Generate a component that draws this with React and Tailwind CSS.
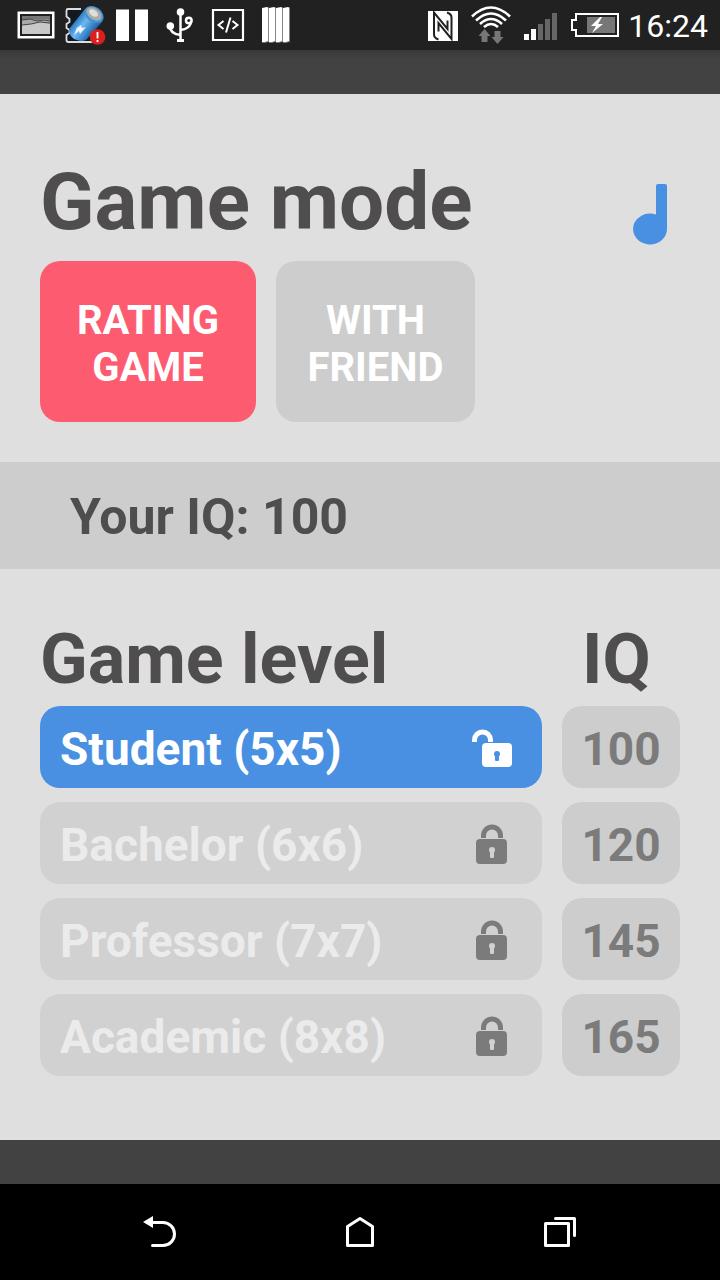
const LEVELS = [
  { name: 'Student (5x5)', iq: 100, unlocked: true },
  { name: 'Bachelor (6x6)', iq: 120, unlocked: false },
  { name: 'Professor (7x7)', iq: 145, unlocked: false },
  { name: 'Academic (8x8)', iq: 165, unlocked: false },
];

function StatusBar() {
  return (
    <header className="flex h-[50px] items-center justify-between bg-[#212121] pl-4 pr-3 text-white">
      <div className="flex items-center">
        <svg viewBox="0 0 40 50" className="h-[50px] w-10" aria-hidden="true">
          <path d="M1.500 11.500h37v27h-37z" fill="#fff" />
          <path d="M5 15h30v20H5z" fill="#aaa" stroke="#212121" strokeWidth="2" />
          <path d="M6 16h28v4l-5-1-7 1-8-1-8 1z" fill="#777" />
          <path d="M6 25l8-1 9-2 11 2v10H6z" fill="#c8c8c8" />
          <path d="M6 20l8-1 7 2 7-1 6 1M6 25l9-1 9-2 10 1" fill="none" stroke="#444" strokeWidth="1" />
        </svg>
        <svg viewBox="0 0 48 50" className="h-[50px] w-12 overflow-visible" aria-hidden="true">
          <defs>
            <linearGradient id="cell" gradientUnits="userSpaceOnUse" x1="22" y1="18" x2="40" y2="32">
              <stop offset="0" stopColor="#2f7cc4" />
              <stop offset="0.35" stopColor="#6db9f4" />
              <stop offset="1" stopColor="#14579c" />
            </linearGradient>
          </defs>
          <path d="M25 9H12q-1.500 0-1.500 1.500v6l3 2.500v3l-3 2v4l3 2v3l-3 2v5q0 2 2 2H38" fill="#101a20" stroke="#ddd" strokeWidth="1.800" />
          <path d="M29 9L13 29q0 9 8 11 5 2 9 0l17-19z" fill="url(#cell)" />
          <ellipse cx="38" cy="14.500" rx="10.500" ry="7.500" fill="#3f93d8" transform="rotate(35 38 14.500)" />
          <ellipse cx="38" cy="14" rx="8.500" ry="5.500" fill="#aaaaa6" transform="rotate(35 38 14)" />
          <ellipse cx="37.500" cy="13" rx="5" ry="3" fill="#dededa" transform="rotate(35 37.500 13)" />
          <path d="M22 25l-4 10 5-4 1 3 6-7-4 1-1-3-4 3z" fill="#e9f5ff" />
          <circle cx="41.500" cy="37" r="7.800" fill="#dc1f1c" />
          <path d="M41.500 32v6.500M41.500 40v2" stroke="#fff" strokeWidth="1.800" />
        </svg>
        <svg viewBox="0 0 56 50" className="h-[50px] w-14" aria-hidden="true">
          <path d="M12 9.500h13V41H12zM31 9.500h13V41H31z" fill="#fff" />
        </svg>
        <svg viewBox="0 0 40 50" className="h-[50px] w-10" aria-hidden="true">
          <g fill="none" stroke="#fff" strokeWidth="2.500">
            <path d="M20.500 12v29M10 26c0 6 5 8.500 10.500 9M20.500 30c5-.5 10.500-3 10.500-9" />
            <circle cx="28.800" cy="20.500" r="2.800" />
          </g>
          <circle cx="20.500" cy="12" r="3.800" fill="#fff" />
          <circle cx="10.300" cy="26" r="3.800" fill="#fff" />
          <path d="M17 39h7v3h-7z" fill="#fff" />
        </svg>
        <svg viewBox="0 0 56 50" className="h-[50px] w-14" aria-hidden="true">
          <path d="M13 10h30v30H13z" fill="none" stroke="#fff" strokeWidth="2.200" />
          <path d="M23.500 21l-5 4 5 4M32.500 21l5 4-5 4M30.500 17.500l-4.500 15" fill="none" stroke="#fff" strokeWidth="2" />
        </svg>
        <svg viewBox="0 0 40 50" className="h-[50px] w-10" aria-hidden="true">
          <path d="M6 8l5-1 2 1 5-1 2 1 5-1 2 1 5-1 2 1v34H6z" fill="#fff" />
          <path d="M12.500 8v34M19.500 8v34M26.500 8v34M33.500 8v34" stroke="#858585" strokeWidth="1" />
          <path d="M6 42.500h3l3-1M13 42.500h3l3-1M20 42.500h3l3-1M27 42.500h3l3-1" fill="none" stroke="#777" strokeWidth="1" />
        </svg>
      </div>
      <div className="flex items-center">
        <svg viewBox="0 0 45 50" className="h-[50px] w-[45px]" aria-hidden="true">
          <path d="M5 11h30v30H5z" fill="#fff" />
          <path d="M15.500 39.500c-3-1-4.500-2-4.500-5V12.500L24.500 29v-8.500M24 12.500c3 1 4.500 2 4.500 5v21.500L15.500 23v8.500" fill="none" stroke="#212121" strokeWidth="2" />
        </svg>
        <svg viewBox="0 0 48 50" className="h-[50px] w-12" aria-hidden="true">
          <g fill="none" stroke="#fff" strokeWidth="2.600">
            <path d="M4 16.500q19-18 38 0M8 20.500q15-14 30 0M12 24q11-10 22 0M16 27q7-6 14 0" />
          </g>
          <path d="M16.500 29l6 7h-3v6h-6v-6h-3zM29.500 44l-6-7h3v-6h6v6h3z" fill="#777" />
        </svg>
        <svg viewBox="0 0 48 50" className="h-[50px] w-12" aria-hidden="true">
          <path d="M8 34h5v6H8zM15 29h5v11h-5z" fill="#fff" />
          <path d="M22 24h5v16h-5zM29 19h5v21h-5zM36 13h5v27h-5z" fill="#666" />
        </svg>
        <svg viewBox="0 0 56 50" className="h-[50px] w-14" aria-hidden="true">
          <path d="M12 14h42v22H12v-6H8V20h4z" fill="none" stroke="#fff" strokeWidth="2" />
          <path d="M23 17h28v16H23z" fill="#777" />
          <path d="M36 17l-9 9h5l-4 7 11-9h-5l4-7z" fill="#fff" />
        </svg>
        <time className="pl-2 pt-px text-[32px] leading-none">16:24</time>
      </div>
    </header>
  );
}

function LockIcon({ open }) {
  return open ? (
    <svg viewBox="0 0 42 42" className="size-[42px]" aria-hidden="true">
      <path d="M4.500 14v-2a8 8 0 0 1 16 0v2" fill="none" stroke="#fff" strokeWidth="5" />
      <rect x="12" y="15" width="30" height="24" rx="4" fill="#fff" />
      <circle cx="27" cy="26" r="3" fill="#4990e2" />
      <rect x="25" y="27" width="4" height="6" rx="1" fill="#4990e2" />
    </svg>
  ) : (
    <svg viewBox="0 0 42 42" className="size-[42px]" aria-hidden="true">
      <path d="M13.500 14v-2.500a8.500 8.500 0 0 1 17 0V14" fill="none" stroke="#7b7b7b" strokeWidth="5" />
      <rect x="6" y="15" width="31" height="25" rx="4" fill="#7b7b7b" />
      <circle cx="22" cy="26" r="3" fill="#d1d1d1" />
      <rect x="20" y="27" width="4" height="7" rx="1" fill="#d1d1d1" />
    </svg>
  );
}

function LevelRow({ level }) {
  return (
    <li className="flex gap-5">
      <button
        type="button"
        className={
          level.unlocked
            ? 'flex h-[82px] flex-1 items-center justify-between rounded-[20px] bg-[#4990e2] pl-5 pr-[30px] pt-1 text-white'
            : 'flex h-[82px] flex-1 items-center justify-between rounded-[20px] bg-[#d1d1d1] pl-5 pr-[30px] pt-1 text-[#ebebeb]'
        }
      >
        <span className="text-[46px] font-bold leading-[54px]">{level.name}</span>
        <LockIcon open={level.unlocked} />
      </button>
      <span className="flex h-[82px] w-[118px] items-center justify-center rounded-[20px] bg-[#cdcdcd] pt-1 text-[46px] font-bold leading-[54px] text-[#7b7b7b]">
        {level.iq}
      </span>
    </li>
  );
}

function NavigationBar() {
  return (
    <nav className="flex h-24 items-center justify-center gap-[152px] bg-black pb-1">
      <button type="button" aria-label="Back">
        <svg viewBox="0 0 48 48" className="size-12" aria-hidden="true">
          <path d="M15 16.500h12a11.500 11.500 0 0 1 0 23H16.500" fill="none" stroke="#fff" strokeWidth="3" strokeLinecap="round" />
          <path d="M7 16l10-6v12z" fill="#fff" />
        </svg>
      </button>
      <button type="button" aria-label="Home">
        <svg viewBox="0 0 48 48" className="size-12" aria-hidden="true">
          <path d="M11.500 20.500L24 12.500l12.500 8v19h-25z" fill="none" stroke="#fff" strokeWidth="3" strokeLinejoin="round" />
        </svg>
      </button>
      <button type="button" aria-label="Recent apps">
        <svg viewBox="0 0 48 48" className="size-12" aria-hidden="true">
          <path d="M9.500 17.500h23v22h-23zM19.500 12.500h19v17" fill="none" stroke="#fff" strokeWidth="3" strokeLinecap="round" strokeLinejoin="round" />
        </svg>
      </button>
    </nav>
  );
}

export default function App() {
  return (
    <div className="flex min-h-screen flex-col bg-[#424242] font-['Roboto',sans-serif]">
      <StatusBar />
      <div className="h-11 bg-linear-to-b from-[#383838] to-[#424242] to-20%" />
      <main className="flex-1 bg-[#dfdfdf] text-[#4f4d4e]">
        <section className="px-10 pb-10 pt-[61px]">
          <div className="flex items-center justify-between">
            <h1 className="text-[80px] font-bold leading-[94px]">Game mode</h1>
            <button type="button" aria-label="Music" className="pt-6">
              <svg viewBox="0 0 60 70" className="h-[70px] w-[60px]" aria-hidden="true">
                <path d="M36 7q0-2 2-2h7q2 0 2 2v42a17 15.500 0 1 1-11-13.500z" fill="#4990e2" />
              </svg>
            </button>
          </div>
          <div className="flex gap-5 pt-3">
            <button type="button" className="h-[161px] w-[216px] rounded-[20px] bg-[#fd5c70] pt-1 text-[40px] font-bold leading-[47px] text-white">
              RATING<br />GAME
            </button>
            <button type="button" className="h-[161px] w-[199px] rounded-[20px] bg-[#cdcdcd] pt-1 text-[40px] font-bold leading-[47px] text-white">
              WITH<br />FRIEND
            </button>
          </div>
        </section>
        <p className="bg-[#cdcdcd] px-[70px] pb-[22px] pt-[26px] text-[50px] font-bold leading-[59px]">Your IQ: 100</p>
        <section className="px-10 pb-16 pt-[49px]">
          <div className="flex gap-5 text-[70px] font-bold leading-[82px]">
            <h2 className="flex-1">Game level</h2>
            <h2 className="w-[118px] pl-5">IQ</h2>
          </div>
          <ul className="flex flex-col gap-[14px] pt-[6px]">
            {LEVELS.map((level) => (
              <LevelRow key={level.name} level={level} />
            ))}
          </ul>
        </section>
      </main>
      <div className="h-11" />
      <NavigationBar />
    </div>
  );
}
